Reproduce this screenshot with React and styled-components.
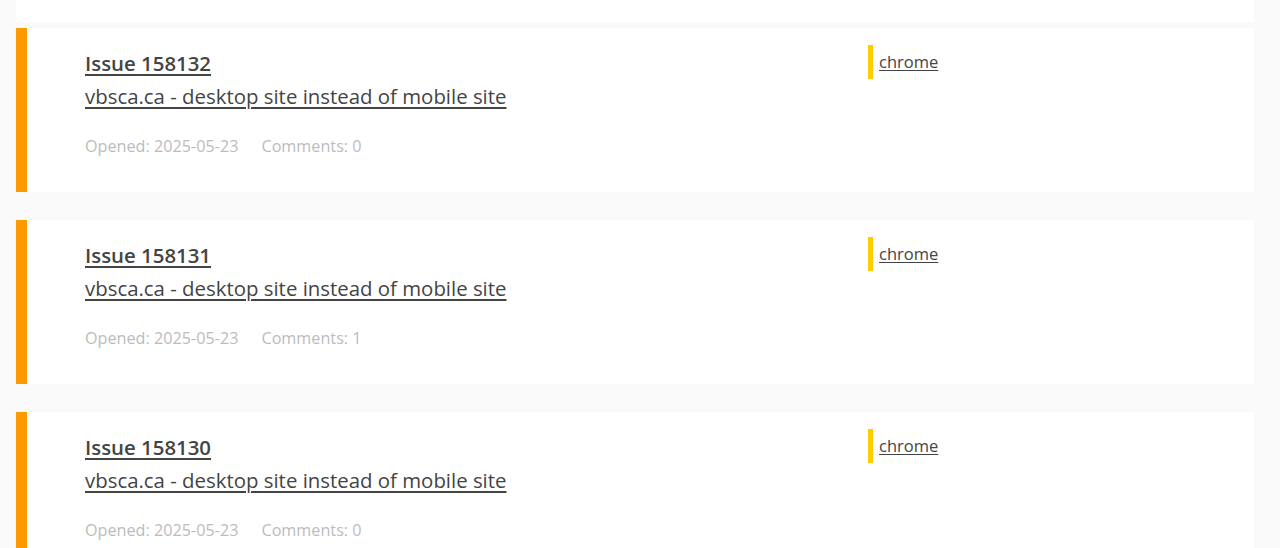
import React from "react";
import styled, { createGlobalStyle } from "styled-components";

const Global = createGlobalStyle`
  html, body { margin: 0; padding: 0; background: #f9f9f9; }
  body { font-family: "Open Sans", "Liberation Sans", sans-serif; color: #444; }
`;

const Page = styled.div`
  padding: 0 26px 0 16px;
  display: flex;
  flex-direction: column;
`;

const TopPanel = styled.div`
  height: 22px;
  background: #fff;
  margin-bottom: 6px;
`;

const List = styled.div`
  display: flex;
  flex-direction: column;
  gap: 28px;
`;

const Card = styled.article`
  height: 164px;
  box-sizing: border-box;
  background: #fff;
  border-left: 11px solid #ff9900;
  display: grid;
  grid-template-columns: 783px 1fr;
  padding: 16px 0 0 58px;
`;

const Main = styled.div`
  display: flex;
  flex-direction: column;
  padding-top: 3px;
`;

const Title = styled.a`
  font-size: 20.4px;
  font-weight: 600;
  line-height: 33px;
  color: #444;
  text-decoration: underline;
  text-underline-offset: 3px;
  align-self: flex-start;
`;

const Summary = styled.a`
  font-size: 20.4px;
  line-height: 33px;
  color: #444;
  text-decoration: underline;
  text-underline-offset: 3px;
  align-self: flex-start;
`;

const Meta = styled.div`
  display: flex;
  gap: 23px;
  margin-top: 21px;
  font-size: 16.2px;
  line-height: 24px;
  color: #bcbcbc;
`;

const Tags = styled.div`
  display: flex;
  align-items: flex-start;
  padding-top: 1px;
`;

const Tag = styled.a`
  border-left: 5px solid #ffcc00;
  padding-left: 6px;
  height: 34px;
  display: flex;
  align-items: center;
  padding-bottom: 2px;
  box-sizing: border-box;
  font-size: 16.5px;
  color: #444;
  text-decoration: underline;
  text-underline-offset: 2px;
`;

const issues = [
  { id: 158132, comments: 0 },
  { id: 158131, comments: 1 },
  { id: 158130, comments: 0 },
];

export default function App() {
  return (
    <>
      <Global />
      <Page>
        <TopPanel />
        <List>
          {issues.map((it) => (
            <Card key={it.id}>
              <Main>
                <Title href="#">Issue {it.id}</Title>
                <Summary href="#">vbsca.ca - desktop site instead of mobile site</Summary>
                <Meta>
                  <span>Opened: 2025-05-23</span>
                  <span>Comments: {it.comments}</span>
                </Meta>
              </Main>
              <Tags>
                <Tag href="#">chrome</Tag>
              </Tags>
            </Card>
          ))}
        </List>
      </Page>
    </>
  );
}
